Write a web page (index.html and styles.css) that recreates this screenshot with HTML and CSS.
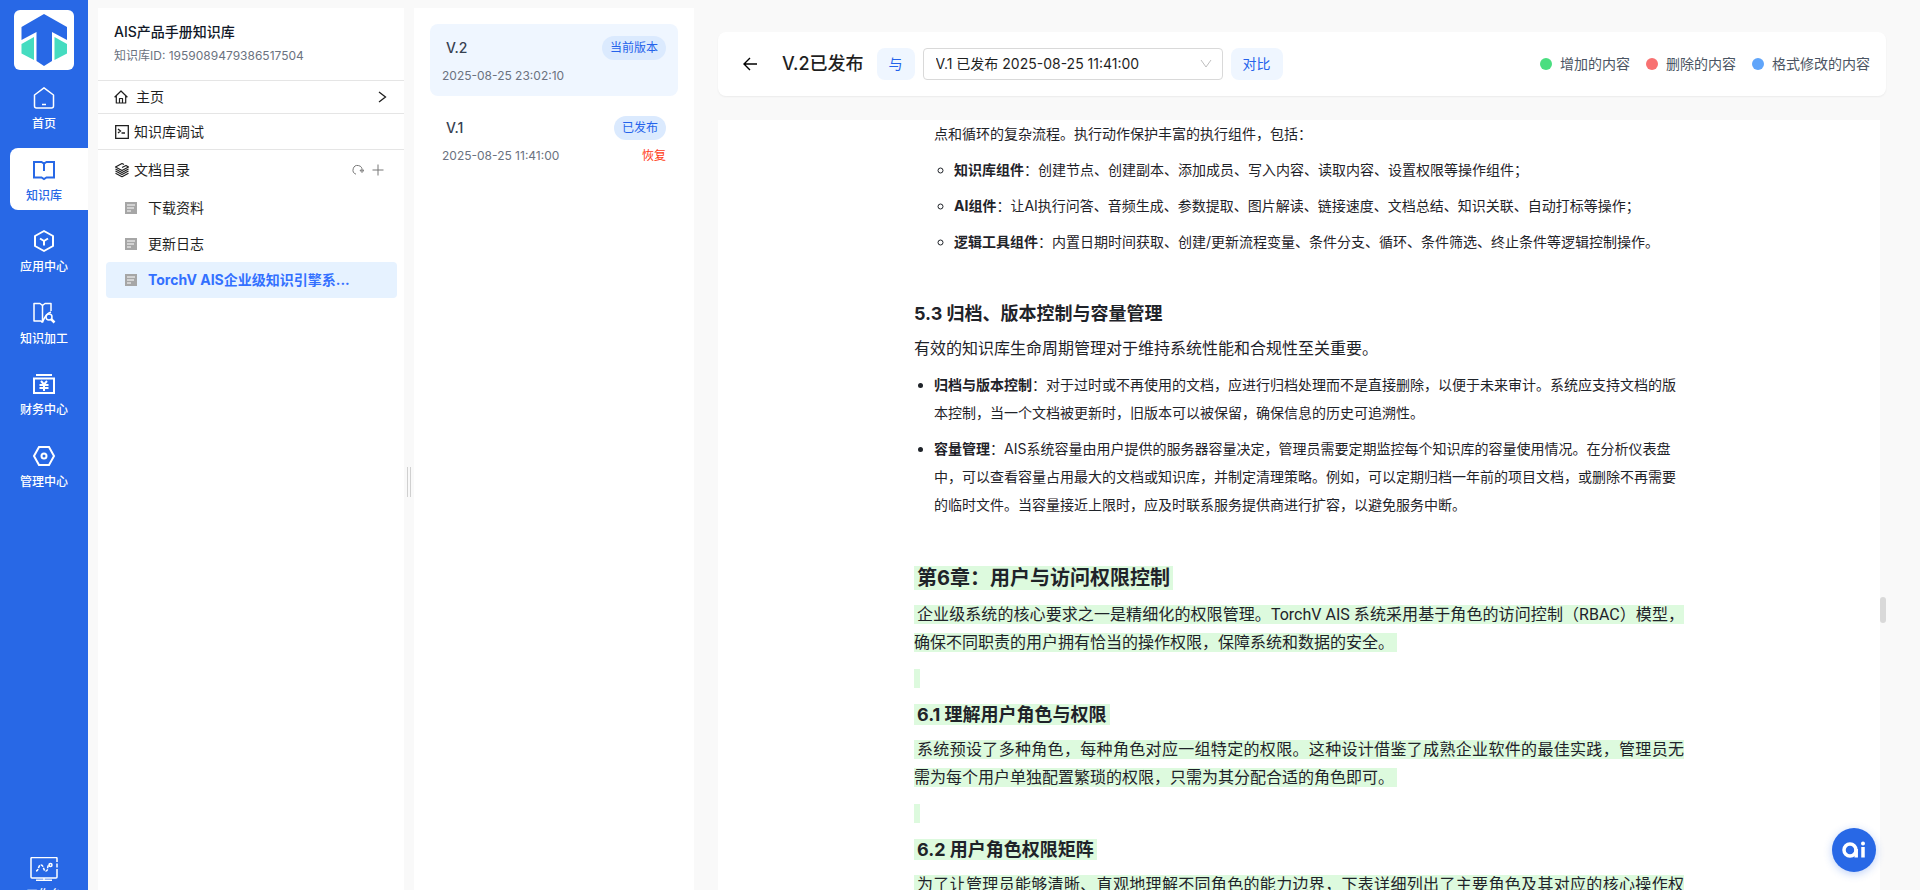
FILE: index.html
```html
<!DOCTYPE html>
<html lang="zh-CN">
<head>
    <meta charset="UTF-8">
    <meta name="viewport" content="width=device-width, initial-scale=1.0">
    <title>AIS产品手册知识库</title>
    <link rel="stylesheet" href="styles.css">
</head>
<body>
    <div class="app">
        <!-- 主导航 -->
        <nav class="sidebar">
            <a class="logo" href="#" aria-label="TorchV">
                <svg width="60" height="60" viewBox="0 0 60 60">
                    <path d="M30 4 53 17V30L38 22V51L30 56 22.500 51V22L7.500 30V17z" fill="#2868e6"/>
                    <path d="M20 27V50L7.500 43.500V34z" fill="#45dcc0"/>
                    <path d="M40.500 27V50L53 43.500V34z" fill="#45dcc0"/>
                </svg>
            </a>
            <div class="nav-list">
                <a class="nav-item" href="#">
                    <svg width="24" height="24" viewBox="0 0 24 24" fill="none" stroke="currentColor" stroke-width="1.5" stroke-linejoin="round">
                        <path d="M2.500 9 12 1.800 21.500 9V20a2 2 0 0 1-2 2H4.500a2 2 0 0 1-2-2z"/>
                        <path d="M10 18.500h4"/>
                    </svg>
                    <span>首页</span>
                </a>
                <a class="nav-item active" href="#">
                    <svg width="24" height="24" viewBox="0 0 24 24" fill="none" stroke="currentColor" stroke-width="2">
                        <path d="M2 4H9.500L12 5.500 14.500 4H22V19.500H14.500L12 21 9.500 19.500H2z"/>
                        <path d="M12 5V13"/>
                    </svg>
                    <span>知识库</span>
                </a>
                <a class="nav-item" href="#">
                    <svg width="24" height="24" viewBox="0 0 24 24" fill="none" stroke="currentColor" stroke-width="2" stroke-linejoin="round">
                        <path d="M12 2 21 7V17L12 22 3 17V7z"/>
                        <path d="M8 9.500 12 12 16 9.500M12 12V16.500"/>
                    </svg>
                    <span>应用中心</span>
                </a>
                <a class="nav-item" href="#">
                    <svg width="24" height="24" viewBox="0 0 24 24" fill="none" stroke="currentColor" stroke-width="1.500" stroke-linejoin="round">
                        <path d="M10.500 21.500 9 20H2V2.500H8L10.500 4.500 13 2.500H19V10"/>
                        <path d="M10.500 4.500V21.500M10.500 21.500C12 18 13 13 19 11"/>
                        <circle cx="17" cy="16" r="3"/>
                        <path d="M19 18 22.500 21.500" stroke-width="2.500"/>
                    </svg>
                    <span>知识加工</span>
                </a>
                <a class="nav-item" href="#">
                    <svg width="24" height="24" viewBox="0 0 24 24" fill="none" stroke="currentColor" stroke-width="2">
                        <path d="M4 3H20M2 6.500H22V21H2z"/>
                        <path d="M9 9 12 12.500 15 9M7.500 13H16.500M7.500 16H16.500M12 12.500V19"/>
                    </svg>
                    <span>财务中心</span>
                </a>
                <a class="nav-item" href="#">
                    <svg width="24" height="24" viewBox="0 0 24 24" fill="none" stroke="currentColor" stroke-width="2">
                        <path d="M7 3H17L22 12 17 21H7L2 12z"/>
                        <circle cx="12" cy="12" r="2.500"/>
                    </svg>
                    <span>管理中心</span>
                </a>
            </div>
            <a class="nav-item workbench" href="#">
                <svg width="28" height="24" viewBox="0 0 28 24" fill="none" stroke="currentColor" stroke-width="1.500">
                    <path d="M27 5V1.500a1 1 0 0 0-1-1H2a1 1 0 0 0-1 1V20a1 1 0 0 0 1 1H26a1 1 0 0 0 1-1V12M27 6.500V10.500"/>
                    <path d="M14 21V23M6 23.200H22"/>
                    <path d="M6 14C9 14 8 8 11 8S13 14 16 14 16 8 20 8" stroke-dasharray="3 1"/>
                    <circle cx="20.500" cy="8" r="1.500"/>
                </svg>
                <span>工作台</span>
            </a>
        </nav>

        <!-- 知识库目录 -->
        <aside class="panel library">
            <header class="library-head">
                <h1>AIS产品手册知识库</h1>
                <p>知识库ID: 1959089479386517504</p>
            </header>
            <a class="row row-home" href="#">
                <svg width="14" height="14" viewBox="0 0 14 14" fill="none" stroke="currentColor" stroke-width="1.200" stroke-linejoin="round">
                    <path d="M.6 7.200 7 1 13.400 7.200M2.300 6V13H11.700V6M5.500 13V8.500H8.500V13"/>
                </svg>
                <span>主页</span>
                <svg class="push" width="10" height="12" viewBox="0 0 10 12" fill="none" stroke="currentColor" stroke-width="1.300">
                    <path d="M1 1 7.500 6 1 11"/>
                </svg>
            </a>
            <a class="row row-debug" href="#">
                <svg width="16" height="16" viewBox="0 0 16 16" fill="none" stroke="currentColor" stroke-width="1.300">
                    <path d="M1.700 1.700H14.300V14.300H1.700z"/>
                    <path d="M4 5 6.500 7 4 9M7.500 9H11"/>
                </svg>
                <span>知识库调试</span>
            </a>
            <div class="row row-docs">
                <svg width="16" height="16" viewBox="0 0 16 16" fill="none" stroke="currentColor" stroke-width="1.200" stroke-linejoin="round">
                    <path d="M8 1.500 1.500 5 8 8.500 14.500 5 12 3.500 8 5.500M8 1.500 10 2.500"/>
                    <path d="M1.500 7 8 10.500 14.500 7M1.500 9 8 12.500 14.500 9M1.500 11.200 8 14.700 14.500 11.200"/>
                </svg>
                <span>文档目录</span>
                <button class="icon-btn push" type="button" aria-label="刷新">
                    <svg width="12" height="12" viewBox="0 0 12 12" fill="none" stroke="currentColor">
                        <path d="M4 10.200A4.500 4.500 0 1 1 10 6.500M8 6.200H12L10 8.500z"/>
                    </svg>
                </button>
                <button class="icon-btn" type="button" aria-label="新建">
                    <svg width="12" height="12" viewBox="0 0 12 12" stroke="currentColor">
                        <path d="M6 .5V11.500M.5 6H11.500"/>
                    </svg>
                </button>
            </div>
            <div class="tree">
                <a href="#">
                    <svg width="12" height="12" viewBox="0 0 12 12"><path d="M0 0H12V12H0z" fill="#a6a6a6"/><path d="M2 3H10M2 6H9M2 9H6" stroke="#fff"/></svg>
                    <span>下载资料</span>
                </a>
                <a href="#">
                    <svg width="12" height="12" viewBox="0 0 12 12"><path d="M0 0H12V12H0z" fill="#a6a6a6"/><path d="M2 3H10M2 6H9M2 9H6" stroke="#fff"/></svg>
                    <span>更新日志</span>
                </a>
                <a class="current" href="#">
                    <svg width="12" height="12" viewBox="0 0 12 12"><path d="M0 0H12V12H0z" fill="#a6a6a6"/><path d="M2 3H10M2 6H9M2 9H6" stroke="#fff"/></svg>
                    <span>TorchV AIS企业级知识引擎系...</span>
                </a>
            </div>
        </aside>

        <div class="splitter"><i></i></div>

        <!-- 版本列表 -->
        <section class="panel versions">
            <article class="version selected">
                <div><strong>V.2</strong><span class="tag">当前版本</span></div>
                <div><time>2025-08-25 23:02:10</time></div>
            </article>
            <article class="version">
                <div><strong>V.1</strong><span class="tag">已发布</span></div>
                <div><time>2025-08-25 11:41:00</time><button class="restore" type="button">恢复</button></div>
            </article>
        </section>

        <!-- 版本对比 -->
        <main class="main">
            <header class="toolbar">
                <button class="back" type="button" aria-label="返回">
                    <svg width="16" height="16" viewBox="0 0 16 16" fill="none" stroke="currentColor" stroke-width="1.400">
                        <path d="M15 8H2M8 2 2 8 8 14"/>
                    </svg>
                </button>
                <h2>V.2已发布</h2>
                <div class="compare">
                    <button class="soft-btn" type="button">与</button>
                    <select aria-label="对比版本">
                        <option>V.1 已发布 2025-08-25 11:41:00</option>
                    </select>
                    <button class="soft-btn" type="button">对比</button>
                </div>
                <ul class="legend">
                    <li class="added">增加的内容</li>
                    <li class="removed">删除的内容</li>
                    <li class="changed">格式修改的内容</li>
                </ul>
            </header>

            <div class="viewer">
                <article class="doc">
                    <ul class="continued">
                        <li>点和循环的复杂流程。执行动作保护丰富的执行组件，包括：
                            <ul>
                                <li><b>知识库组件</b>：创建节点、创建副本、添加成员、写入内容、读取内容、设置权限等操作组件；</li>
                                <li><b>AI组件</b>：让AI执行问答、音频生成、参数提取、图片解读、链接速度、文档总结、知识关联、自动打标等操作；</li>
                                <li><b>逻辑工具组件</b>：内置日期时间获取、创建/更新流程变量、条件分支、循环、条件筛选、终止条件等逻辑控制操作。</li>
                            </ul>
                        </li>
                    </ul>
                    <p></p>
                    <h3>5.3 归档、版本控制与容量管理</h3>
                    <p>有效的知识库生命周期管理对于维持系统性能和合规性至关重要。</p>
                    <ul>
                        <li><b>归档与版本控制</b>：对于过时或不再使用的文档，应进行归档处理而不是直接删除，以便于未来审计。系统应支持文档的版本控制，当一个文档被更新时，旧版本可以被保留，确保信息的历史可追溯性。</li>
                        <li><b>容量管理</b>：AIS系统容量由用户提供的服务器容量决定，管理员需要定期监控每个知识库的容量使用情况。在分析仪表盘中，可以查看容量占用最大的文档或知识库，并制定清理策略。例如，可以定期归档一年前的项目文档，或删除不再需要的临时文件。当容量接近上限时，应及时联系服务提供商进行扩容，以避免服务中断。</li>
                    </ul>
                    <p></p>
                    <h2><ins>第6章：用户与访问权限控制</ins></h2>
                    <p><ins>企业级系统的核心要求之一是精细化的权限管理。TorchV AIS 系统采用基于角色的访问控制（RBAC）模型，确保不同职责的用户拥有恰当的操作权限，保障系统和数据的安全。</ins></p>
                    <p><ins></ins></p>
                    <h3><ins>6.1 理解用户角色与权限</ins></h3>
                    <p><ins>系统预设了多种角色，每种角色对应一组特定的权限。这种设计借鉴了成熟企业软件的最佳实践，管理员无需为每个用户单独配置繁琐的权限，只需为其分配合适的角色即可。</ins></p>
                    <p><ins></ins></p>
                    <h3><ins>6.2 用户角色权限矩阵</ins></h3>
                    <p><ins>为了让管理员能够清晰、直观地理解不同角色的能力边界，下表详细列出了主要角色及其对应的核心操作权限。</ins></p>
                </article>
                <div class="scroll-thumb"></div>
            </div>
        </main>
    </div>

    <button class="ai-btn" type="button" aria-label="ai">
        <svg width="24" height="18" viewBox="0 0 24 18" fill="none" stroke="#fff" stroke-width="3.500">
            <circle cx="8" cy="9" r="6"/>
            <path d="M14.200 8V16.500M21 6V16.500"/>
            <circle cx="21" cy="2.500" r="2" fill="#fff" stroke="none"/>
        </svg>
    </button>
</body>
</html>
```
FILE: styles.css
```css
* {
    box-sizing: border-box;
    margin: 0;
    padding: 0;
}

body {
    background: #f9f9f9;
    color: #1f1f1f;
    font-family: Inter, "Noto Sans CJK SC", sans-serif;
    font-size: 14px;
    line-height: 20px;
    overflow: hidden;
}

a {
    color: inherit;
    text-decoration: none;
}

ul {
    list-style: none;
}

button {
    border: none;
    background: none;
    font: inherit;
    cursor: pointer;
}

svg {
    display: block;
    flex: none;
}

.app {
    display: flex;
    height: 100vh;
}

/* 主导航 */
.sidebar {
    display: flex;
    flex-direction: column;
    flex: none;
    width: 88px;
    padding-top: 10px;
    background: #2868e6;
    color: #fff;
}

.logo {
    align-self: center;
    margin-bottom: 6px;
    border-radius: 6px;
    background: #fff;
}

.nav-list {
    display: flex;
    flex-direction: column;
    justify-content: space-between;
    height: 420px;
}

.nav-item {
    display: flex;
    flex-direction: column;
    align-items: center;
    gap: 4px;
    height: 62px;
    margin-left: 10px;
    padding: 10px 10px 0 0;
    border-radius: 8px 0 0 8px;
    font-size: 12px;
    font-weight: 500;
}

.nav-item.active {
    background: #fff;
    color: #2868e6;
}

.workbench {
    margin-top: auto;
    margin-bottom: -19px;
}

/* 面板 */
.panel {
    flex: none;
    margin-top: 8px;
    background: #fff;
}

.library {
    width: 306px;
    margin-left: 10px;
}

.library-head {
    padding: 14px 16px;
    border-bottom: 1px solid #e5e5e5;
}

.library-head h1 {
    margin-bottom: 4px;
    color: #111827;
    font-size: 14px;
    font-weight: 500;
}

.library-head p {
    color: #6b7280;
    font-size: 12px;
}

.row {
    display: flex;
    align-items: center;
    gap: 4px;
    padding: 0 16px;
    border-bottom: 1px solid #e5e5e5;
}

.row-home {
    gap: 8px;
    height: 33px;
}

.row-debug {
    height: 36px;
}

.row-docs {
    height: 40px;
    padding-right: 18px;
    border: none;
}

.push {
    margin-left: auto;
}

.icon-btn {
    padding: 2px;
    color: #777;
}

.tree {
    padding: 0 7px 0 8px;
}

.tree a {
    display: flex;
    align-items: center;
    gap: 11px;
    height: 36px;
    padding-left: 19px;
    border-radius: 4px;
}

.tree .current {
    background: #e6f2ff;
    color: #3370ff;
    font-weight: 700;
}

.splitter {
    display: flex;
    align-items: center;
    justify-content: center;
    flex: none;
    width: 10px;
    padding-top: 74px;
}

.splitter i {
    width: 4px;
    height: 30px;
    border: solid #d0d0d0;
    border-width: 0 1px;
}

/* 版本列表 */
.versions {
    display: flex;
    flex-direction: column;
    gap: 8px;
    width: 280px;
    padding: 16px;
}

.version {
    display: flex;
    flex-direction: column;
    gap: 6px;
    padding: 12px 12px 10px;
    border-radius: 8px;
}

.version.selected {
    background: #eff6ff;
}

.version div {
    display: flex;
    align-items: center;
    justify-content: space-between;
    line-height: 20px;
}

.version strong {
    padding-left: 4px;
    color: #374151;
    font-weight: 500;
}

.version time {
    color: #6b7280;
    font-size: 12px;
}

.tag {
    padding: 0 8px;
    border-radius: 12px;
    background: #dbeafe;
    color: #2563eb;
    font-size: 12px;
    line-height: 24px;
}

.restore {
    color: #ff3b14;
    font-size: 12px;
}

/* 版本对比 */
.main {
    display: flex;
    flex-direction: column;
    flex: 1;
    gap: 24px;
    min-width: 0;
    padding: 32px 34px 0 24px;
}

.toolbar {
    display: flex;
    align-items: center;
    flex: none;
    height: 64px;
    padding: 0 16px 0 24px;
    border-radius: 8px;
    background: #fff;
    box-shadow: 0 1px 2px rgba(0, 0, 0, 0.06);
}

.toolbar h2 {
    margin: 0 13px 0 24px;
    font-size: 18px;
    font-weight: 500;
}

.compare {
    display: flex;
    gap: 8px;
}

.soft-btn {
    height: 32px;
    padding: 0 12px;
    border-radius: 8px;
    background: #eff6ff;
    color: #2563eb;
}

.compare select {
    width: 300px;
    height: 32px;
    padding: 0 12px;
    border: 1px solid #d9d9d9;
    border-radius: 4px;
    appearance: none;
    background: #fff url("data:image/svg+xml,%3Csvg xmlns='http://www.w3.org/2000/svg' width='12' height='10' fill='none' stroke='%23bfbfbf'%3E%3Cpath d='M1 1 6 8 11 1'/%3E%3C/svg%3E") no-repeat right 10px center;
    color: #1f1f1f;
    font: inherit;
}

.legend {
    display: flex;
    gap: 16px;
    margin-left: auto;
    color: #4b5563;
}

.legend li {
    display: flex;
    align-items: center;
    gap: 8px;
}

.legend li::before {
    content: "";
    width: 12px;
    height: 12px;
    border-radius: 50%;
    background: #4ade80;
}

.legend .removed::before {
    background: #f87171;
}

.legend .changed::before {
    background: #60a5fa;
}

.viewer {
    position: relative;
    flex: 1;
    min-height: 0;
    margin-right: 6px;
}

.doc {
    height: 100%;
    padding: 0 24px;
    overflow: hidden;
    background: #fff;
    color: #1f2329;
    font-size: 16px;
    line-height: 28px;
}

.doc > * {
    max-width: 770px;
    margin: 0 auto 8px;
}

.doc p {
    min-height: 28px;
    font-family: Roboto, "Noto Sans CJK SC", sans-serif;
    text-align: justify;
}

.doc h2 {
    font-size: 20px;
    font-weight: 700;
    line-height: 30px;
}

.doc h3 {
    font-size: 18px;
    font-weight: 700;
    line-height: 27px;
}

.doc ul {
    padding-left: 20px;
    list-style: disc;
    font-size: 14px;
}

.doc .continued {
    list-style: none;
}

.doc ul ul {
    margin-top: 8px;
    list-style: circle;
}

.doc li + li {
    margin-top: 8px;
}

.doc b {
    font-weight: 700;
}

.doc ins {
    padding: 0 3px;
    background: #ddfade;
    text-decoration: none;
}

.scroll-thumb {
    position: absolute;
    top: 62%;
    right: -6px;
    width: 6px;
    height: 26px;
    border-radius: 3px;
    background: #d9d9d9;
}

.ai-btn {
    display: flex;
    align-items: center;
    justify-content: center;
    position: fixed;
    right: 44px;
    bottom: 18px;
    width: 44px;
    height: 44px;
    border-radius: 50%;
    background: #2868e6;
    box-shadow: 0 2px 8px rgba(40, 104, 230, 0.3);
}
```
